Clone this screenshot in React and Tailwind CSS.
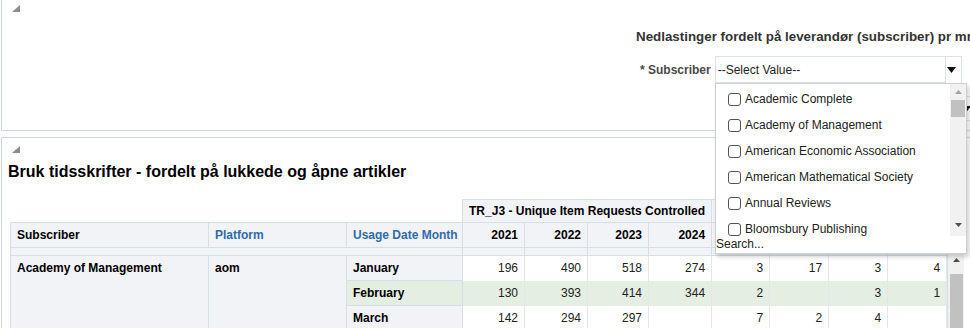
import React from 'react';

const Tri = () => (
  <svg width="8" height="7" viewBox="0 0 8 7" className="block">
    <polygon points="8,0 8,7 0,7" fill="#8d8d8d" />
  </svg>
);

const Arrow = ({ color = '#111' }) => (
  <svg width="9" height="6" viewBox="0 0 9 6" className="block">
    <polygon points="0,0 9,0 4.5,6" fill={color} />
  </svg>
);

const UpArrow = ({ color }) => (
  <svg width="7" height="4" viewBox="0 0 7 4" className="block">
    <polygon points="3.5,0 7,4 0,4" fill={color} />
  </svg>
);

const subscribers = [
  'Academic Complete',
  'Academy of Management',
  'American Economic Association',
  'American Mathematical Society',
  'Annual Reviews',
  'Bloomsbury Publishing',
  'Brill',
];

const years = ['2021', '2022', '2023', '2024'];
const widths = [198, 138, 116, 62, 63, 61, 63, 58, 59, 59, 59];

const rows = [
  { month: 'January', vals: ['196', '490', '518', '274', '3', '17', '3', '4'] },
  { month: 'February', vals: ['130', '393', '414', '344', '2', '', '3', '1'], green: true },
  { month: 'March', vals: ['142', '294', '297', '', '7', '2', '4', ''] },
];

const SubscriberMenu = () => (
  <div className="absolute left-[715px] top-[83px] w-[252px] bg-white border border-[#cfcfcf] shadow-[2px_3px_4px_rgba(0,0,0,0.18)] z-10 text-[12px] text-[#222]">
    <div className="flex h-[152px]">
      <ul className="flex-1 overflow-hidden pt-[2px]">
        {subscribers.map((s) => (
          <li key={s} className="h-[26px] flex items-center pl-[12px] gap-[4px] whitespace-nowrap">
            <span className="w-[13px] h-[13px] border border-[#555] rounded-[3px] bg-white shrink-0" />
            {s}
          </li>
        ))}
      </ul>
      <div className="w-[16px] bg-[#f1f1f1] flex flex-col items-center">
        <div className="h-[16px] flex items-center justify-center">
          <UpArrow color="#a3a3a3" />
        </div>
        <div className="w-[14px] h-[17px] bg-[#c1c1c1]" />
        <div className="flex-1" />
        <div className="h-[16px] mb-[3px] flex items-center justify-center rotate-180">
          <UpArrow color="#505050" />
        </div>
      </div>
    </div>
    <div className="h-[17px] leading-[17px] whitespace-nowrap">Search...</div>
  </div>
);

export default function App() {
  return (
    <div className="relative w-[970px] h-[328px] overflow-hidden bg-white font-['Liberation_Sans',Arial,sans-serif] text-black">
      <div className="pl-px">
        {/* top panel */}
        <div className="h-[131px] border-l border-b border-[#cfd6de] overflow-hidden">
          <div className="pl-[10px] pt-[5px]">
            <Tri />
          </div>
          <div className="ml-[634px] mt-[17px] text-[13.35px] leading-4 font-bold text-[#333] whitespace-nowrap">
            Nedlastinger fordelt på leverandør (subscriber) pr mnd
          </div>
          <div className="ml-[638px] mt-[11px] flex items-center h-[27px] whitespace-nowrap">
            <span className="text-[12px] font-bold text-[#4a4a4a] mr-[4px]">* Subscriber</span>
            <div className="flex h-[27px]">
              <div className="w-[231px] border border-[#dde2e8] pl-[2px] text-[12px] text-[#222] flex items-center">
                --Select Value--
              </div>
              <div className="w-[16px] border-t border-r border-[#dde2e8] flex items-center pl-px">
                <Arrow />
              </div>
            </div>
          </div>
          <div className="ml-[713px] mt-[13px] flex h-[25px] w-[262px] border border-[#dde2e8]">
            <div className="flex-1" />
            <div className="w-[14px] flex items-center">
              <Arrow />
            </div>
          </div>
        </div>

        {/* bottom panel */}
        <div className="mt-[6px] border-t border-l border-[#cfd6de]">
          <div className="pl-[10px] pt-[8px]">
            <Tri />
          </div>
          <h2 className="pl-[6px] mt-[9px] text-[16px] leading-5 font-bold whitespace-nowrap">
            Bruk tidsskrifter - fordelt på lukkede og åpne artikler
          </h2>
          <div className="flex items-start pl-[8px] mt-[17px]">
            <table className="table-fixed border-collapse w-[936px] text-[12px] leading-[15px]">
              <colgroup>
                {widths.map((w, i) => (
                  <col key={i} style={{ width: w }} />
                ))}
              </colgroup>
              <thead>
                <tr className="h-[23px]">
                  <td colSpan={3} />
                  <th colSpan={4} className="border border-[#d8dee6] bg-[#f1f3f7] text-left pl-[6px] font-bold whitespace-nowrap">
                    TR_J3 - Unique Item Requests Controlled
                  </th>
                  <th colSpan={4} className="border border-[#d8dee6] bg-[#f1f3f7] text-left pl-[6px] font-bold whitespace-nowrap overflow-hidden">
                    TR_J3 - Unique Item Requests OA_Gold
                  </th>
                </tr>
                <tr className="h-[25px]">
                  <th className="border border-[#d8dee6] bg-[#f1f3f7] text-left pl-[6px] font-bold">Subscriber</th>
                  <th className="border border-[#d8dee6] bg-[#f1f3f7] text-left pl-[6px] font-bold text-[#2f6cad]">Platform</th>
                  <th className="border border-[#d8dee6] bg-[#f1f3f7] text-left pl-[6px] font-bold text-[#2f6cad] whitespace-nowrap">Usage Date Month</th>
                  {[...years, ...years].map((y, i) => (
                    <th key={i} className="border border-[#d8dee6] bg-[#f1f3f7] text-right pr-[6px] font-bold">{y}</th>
                  ))}
                </tr>
                <tr className="h-[8px]">
                  <td colSpan={3} className="border border-[#d8dee6] bg-[#f1f3f7]" />
                  {widths.slice(3).map((_, i) => (
                    <td key={i} className="border border-[#d8dee6] bg-[#f1f3f7]" />
                  ))}
                </tr>
              </thead>
              <tbody>
                {rows.map((r, ri) => (
                  <tr key={r.month} className="h-[25px]">
                    {ri === 0 && (
                      <>
                        <td rowSpan={3} className="border border-[#d8dee6] bg-[#f1f3f7] align-top pt-[5px] pl-[6px] font-bold whitespace-nowrap">
                          Academy of Management
                        </td>
                        <td rowSpan={3} className="border border-[#d8dee6] bg-[#f1f3f7] align-top pt-[5px] pl-[6px] font-bold">
                          aom
                        </td>
                      </>
                    )}
                    <td className={`border border-[#d8dee6] pl-[6px] font-bold ${r.green ? 'bg-[#e4eee2]' : 'bg-[#f1f3f7]'}`}>
                      {r.month}
                    </td>
                    {r.vals.map((v, i) => (
                      <td
                        key={i}
                        className={`border-r border-[#e3e7ec] text-right pr-[6px] text-[#222] ${r.green ? 'bg-[#e4eee2]' : 'bg-white'}`}
                      >
                        {v}
                      </td>
                    ))}
                  </tr>
                ))}
              </tbody>
            </table>
            <div className="mt-[53px] w-[17px] h-[90px] bg-[#f1f1f1] border-l border-[#d8dee6] flex flex-col items-center">
              <div className="h-[16px] flex items-center justify-center">
                <UpArrow color="#505050" />
              </div>
              <div className="mt-[6px] w-[13px] flex-1 bg-[#c1c1c1]" />
            </div>
          </div>
        </div>
      </div>
      <SubscriberMenu />
    </div>
  );
}
